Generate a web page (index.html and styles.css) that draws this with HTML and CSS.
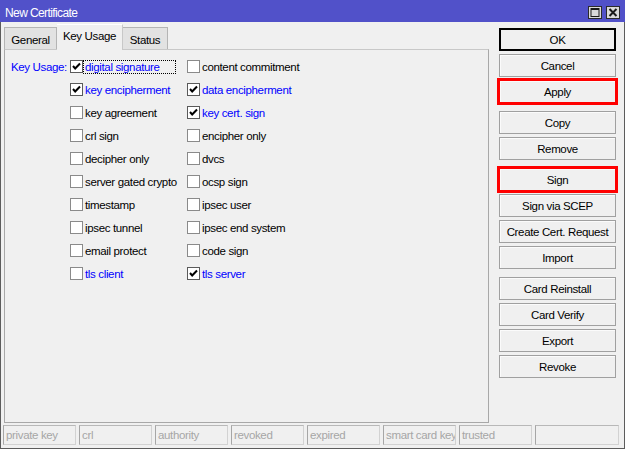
FILE: index.html
```html
<!DOCTYPE html>
<html>
<head>
<meta charset="utf-8">
<title>New Certificate</title>
<link rel="stylesheet" href="styles.css">
</head>
<body>
<div class="win">
  <div class="titlebar">
    <span class="title">New Certificate</span>
    <div class="tbtns">
      <span class="tbtn">
        <svg width="14" height="13" viewBox="0 0 14 13"><rect x="0.5" y="0.5" width="13" height="12" fill="#dadada" stroke="#2b2b2b"/><rect x="3" y="2.5" width="8" height="8" fill="none" stroke="#1a1a1a" stroke-width="1"/><rect x="3" y="2" width="8" height="2" fill="#1a1a1a"/></svg>
      </span>
      <span class="tbtn">
        <svg width="14" height="13" viewBox="0 0 14 13"><rect x="0.5" y="0.5" width="13" height="12" fill="#dadada" stroke="#2b2b2b"/><path d="M3.5 3 L10.5 10 M10.5 3 L3.5 10" stroke="#1a1a1a" stroke-width="2"/></svg>
      </span>
    </div>
  </div>
  <div class="body">
    <div class="main">
      <div class="left">
        <div class="tabs">
          <div class="tab t-general">General</div>
          <div class="tab sel t-key">Key Usage</div>
          <div class="tab t-status">Status</div>
        </div>
        <div class="panel">
          <div class="grid">
            <div class="ku">Key Usage:</div>
            <div class="cb on"><span class="box"><svg width="11" height="11" viewBox="0 0 11 11"><polyline points="2,5 4.2,7.5 9,2.5" fill="none" stroke="#000" stroke-width="2"/></svg></span><span class="lbl blue focus">digital signature</span></div>
            <div class="cb"><span class="box"></span><span class="lbl">content commitment</span></div>

            <div></div>
            <div class="cb on"><span class="box"><svg width="11" height="11" viewBox="0 0 11 11"><polyline points="2,5 4.2,7.5 9,2.5" fill="none" stroke="#000" stroke-width="2"/></svg></span><span class="lbl blue">key encipherment</span></div>
            <div class="cb on"><span class="box"><svg width="11" height="11" viewBox="0 0 11 11"><polyline points="2,5 4.2,7.5 9,2.5" fill="none" stroke="#000" stroke-width="2"/></svg></span><span class="lbl blue">data encipherment</span></div>

            <div></div>
            <div class="cb"><span class="box"></span><span class="lbl">key agreement</span></div>
            <div class="cb on"><span class="box"><svg width="11" height="11" viewBox="0 0 11 11"><polyline points="2,5 4.2,7.5 9,2.5" fill="none" stroke="#000" stroke-width="2"/></svg></span><span class="lbl blue">key cert. sign</span></div>

            <div></div>
            <div class="cb"><span class="box"></span><span class="lbl">crl sign</span></div>
            <div class="cb"><span class="box"></span><span class="lbl">encipher only</span></div>

            <div></div>
            <div class="cb"><span class="box"></span><span class="lbl">decipher only</span></div>
            <div class="cb"><span class="box"></span><span class="lbl">dvcs</span></div>

            <div></div>
            <div class="cb"><span class="box"></span><span class="lbl">server gated crypto</span></div>
            <div class="cb"><span class="box"></span><span class="lbl">ocsp sign</span></div>

            <div></div>
            <div class="cb"><span class="box"></span><span class="lbl">timestamp</span></div>
            <div class="cb"><span class="box"></span><span class="lbl">ipsec user</span></div>

            <div></div>
            <div class="cb"><span class="box"></span><span class="lbl">ipsec tunnel</span></div>
            <div class="cb"><span class="box"></span><span class="lbl">ipsec end system</span></div>

            <div></div>
            <div class="cb"><span class="box"></span><span class="lbl">email protect</span></div>
            <div class="cb"><span class="box"></span><span class="lbl">code sign</span></div>

            <div></div>
            <div class="cb"><span class="box"></span><span class="lbl blue">tls client</span></div>
            <div class="cb on"><span class="box"><svg width="11" height="11" viewBox="0 0 11 11"><polyline points="2,5 4.2,7.5 9,2.5" fill="none" stroke="#000" stroke-width="2"/></svg></span><span class="lbl blue">tls server</span></div>
          </div>
        </div>
      </div>
      <div class="side">
        <div class="btn default">OK</div>
        <div class="btn">Cancel</div>
        <div class="btn mark">Apply</div>
        <div class="btn grp">Copy</div>
        <div class="btn">Remove</div>
        <div class="btn grp mark">Sign</div>
        <div class="btn">Sign via SCEP</div>
        <div class="btn">Create Cert. Request</div>
        <div class="btn">Import</div>
        <div class="btn grp">Card Reinstall</div>
        <div class="btn">Card Verify</div>
        <div class="btn">Export</div>
        <div class="btn">Revoke</div>
      </div>
    </div>
    <div class="status">
      <div class="fld">private key</div>
      <div class="fld">crl</div>
      <div class="fld">authority</div>
      <div class="fld">revoked</div>
      <div class="fld">expired</div>
      <div class="fld">smart card key</div>
      <div class="fld">trusted</div>
      <div class="fld last"></div>
    </div>
  </div>
</div>
</body>
</html>
```
FILE: styles.css
```css
* { box-sizing: border-box; }

body {
  margin: 0;
  background: #f0f0f0;
  font-family: "Liberation Sans", Arial, sans-serif;
  font-size: 11.5px;
  letter-spacing: -0.35px;
  color: #000;
}

.win {
  width: 625px;
  height: 449px;
  display: flex;
  flex-direction: column;
}

.titlebar {
  height: 22px;
  flex: none;
  background: #5151c9;
  color: #fff;
  display: flex;
  align-items: flex-start;
  padding: 0 5px 0 5px;
}

.title {
  flex: 1;
  margin-top: 6px;
  line-height: 14px;
  font-size: 12px;
  letter-spacing: -0.6px;
}

.tbtns {
  display: flex;
  gap: 4px;
  margin-top: 6px;
}

.tbtn {
  display: block;
  width: 14px;
  height: 13px;
}

.tbtn svg { display: block; }

.body {
  flex: 1;
  border: 1px solid #5c5c5c;
  border-top: 0;
  display: flex;
  flex-direction: column;
}

.main {
  display: flex;
  padding-left: 3px;
  height: 401px;
}

.left {
  width: 485px;
  display: flex;
  flex-direction: column;
}

.tabs {
  height: 28px;
  display: flex;
  align-items: flex-end;
}

.tab {
  height: 22px;
  margin-bottom: 1px;
  border: 1px solid #b4b4b4;
  border-bottom: 0;
  background: #e2e2e2;
  display: flex;
  align-items: center;
  justify-content: center;
  padding-top: 2px;
}

.t-general { width: 53px; }
.t-key { width: 66px; }
.t-status { width: 45px; border-left: 0; }

.tab.sel {
  height: 26px;
  margin-bottom: 0;
  background: #f0f0f0;
  border-color: #c8c8c8;
  border-top-color: #ffffff;
  border-left: 0;
  position: relative;
  z-index: 1;
  padding-top: 0;
  padding-bottom: 3px;
}

.panel {
  margin-top: -1px;
  height: 374px;
  border: 1px solid #a8a8a8;
  border-top-color: #c8c8c8;
  padding: 5px 0 0 6px;
}

.grid {
  display: grid;
  grid-template-columns: 59px 117px auto;
  grid-auto-rows: 23px;
  align-items: center;
}

.ku {
  color: #0000ff;
  line-height: 14px;
}

.cb {
  display: flex;
  align-items: center;
}

.box {
  width: 13px;
  height: 13px;
  border: 1px solid #8a8a8a;
  background: #fff;
  flex: none;
}

.cb.on .box { border-color: #5a5a5a; }

.box svg { display: block; }

.lbl {
  border: 1px dotted transparent;
  padding: 0 1px;
  line-height: 12px;
  white-space: nowrap;
}

.lbl.blue { color: #0000ff; }

.lbl.focus {
  width: 93px;
  border-color: #000;
}

.side {
  margin-left: 10px;
  width: 117px;
  padding-top: 6px;
}

.btn {
  height: 23px;
  margin-top: 3px;
  border: 1px solid #a0a0a0;
  background: #f0f0f0;
  box-shadow: inset 1px 1px 0 #fbfbfb;
  display: flex;
  align-items: center;
  justify-content: center;
  white-space: nowrap;
}

.btn.default {
  margin-top: 0;
  border-color: #000;
  box-shadow: inset 0 0 0 1px #000;
}

.btn.grp { margin-top: 8px; }

.btn.mark {
  outline: 3px solid #ff0000;
  outline-offset: -1px;
}

.status {
  display: flex;
  padding-left: 2px;
  margin-top: 2px;
  height: 20px;
}

.fld {
  width: 73px;
  margin-right: 3px;
  border: 1px solid #d2d2d2;
  border-left-color: #a6a6a6;
  border-top-color: #b8b8b8;
  color: #a6a6a6;
  padding-left: 2px;
  line-height: 18px;
  white-space: nowrap;
  overflow: hidden;
}

.fld.last {
  width: 84px;
  margin-right: 0;
}
```
